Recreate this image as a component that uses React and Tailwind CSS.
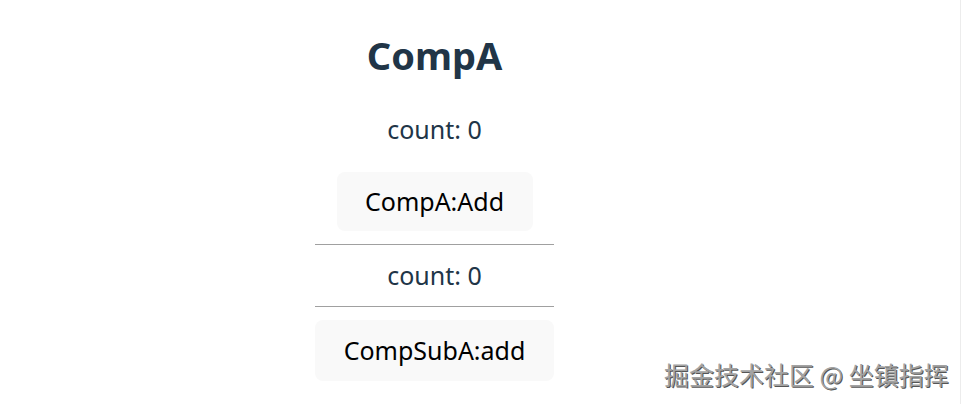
export default function App() {
  return (
    <div className="relative w-[963px] h-[404px] bg-white overflow-hidden" style={{ fontFamily: '"Noto Sans", "Open Sans", sans-serif' }}>
      <div className="absolute right-[2px] top-0 h-full w-[1px] bg-[#ececec]" />
      <div className="flex justify-center w-[869px]">
        <div className="flex flex-col items-center w-[239px] pt-[29px]">
          <h1 className="text-[38px] leading-[52px] font-bold text-[#213547]">CompA</h1>
          <p className="mt-[33px] text-[25px] leading-[30px] text-[#213547]">count: 0</p>
          <button className="mt-[28px] h-[59px] w-[196px] rounded-[8px] bg-[#f9f9f9] text-[25px] text-black">CompA:Add</button>
          <div className="mt-[13px] w-full h-[1px] bg-[#a0a0a0]" />
          <p className="mt-[15px] text-[25px] leading-[30px] text-[#213547]">count: 0</p>
          <div className="mt-[16px] w-full h-[1px] bg-[#a0a0a0]" />
          <button className="mt-[13px] w-full h-[61px] rounded-[8px] bg-[#f9f9f9] text-[25px] text-black">CompSubA:add</button>
        </div>
      </div>
      <div className="absolute left-[664px] top-[356px] text-[25px] leading-[36px] text-[#a3a3a3]" style={{ fontFamily: '"Noto Sans CJK SC", sans-serif', textShadow: '1px 1px 0 #555, -1px -1px 0 #fff' }}>掘金技术社区 @ 坐镇指挥</div>
    </div>
  );
}
